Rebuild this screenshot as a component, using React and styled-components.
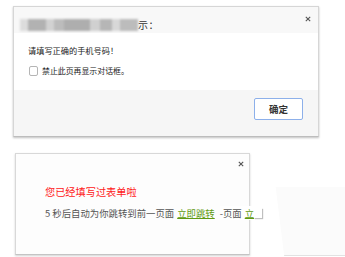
import React from 'react';
import styled, { createGlobalStyle } from 'styled-components';

const GlobalStyle = createGlobalStyle`
  html, body {
    margin: 0;
    padding: 0;
    background: #ffffff;
  }
  body {
    font-family: 'Noto Sans CJK SC', 'Noto Sans', sans-serif;
    color: #333;
  }
`;

const Page = styled.div`
  width: 345px;
  height: 257px;
  overflow: hidden;
  position: relative;
  padding: 6px 0 0 13px;
  box-sizing: border-box;
  display: flex;
  flex-direction: column;
  gap: 16px;
`;

const Dialog = styled.div`
  position: relative;
  width: 306px;
  height: 131px;
  box-sizing: border-box;
  border: 1px solid #d6d6d6;
  border-bottom-color: #bdbdbd;
  box-shadow: 0 1px 2px rgba(0, 0, 0, 0.25);
  display: flex;
  flex-direction: column;
  background: #fff;
`;

const TitleBar = styled.div`
  height: 26px;
  background: #f8f8f8;
  display: flex;
  align-items: flex-end;
  padding-left: 6px;
  box-sizing: border-box;
  padding-bottom: 1px;
`;

// the blurred-out part of the title
const Blur = styled.div`
  display: flex;
  height: 12px;
  width: 118px;
  filter: blur(1px);
  margin-bottom: 1px;
`;

const Piece = styled.div`
  width: ${(p) => p.$w}px;
  background: ${(p) => p.$c};
`;

const TitleText = styled.span`
  font-size: 10px;
  line-height: 14px;
  color: #333;
  letter-spacing: 0.5px;
`;

const Close = styled.button`
  position: absolute;
  top: ${(p) => p.$top}px;
  right: ${(p) => p.$right}px;
  border: 0;
  padding: 0;
  background: transparent;
  display: flex;
  color: #666;
`;

const Body = styled.div`
  height: 57px;
  padding: 11px 0 0 14px;
  box-sizing: border-box;
  display: flex;
  flex-direction: column;
  gap: 9px;
`;

const Message = styled.div`
  font-size: 8.2px;
  line-height: 12px;
  color: #222;
`;

const CheckRow = styled.label`
  display: flex;
  align-items: center;
  gap: 4px;
  padding-left: 1px;
`;

const Box = styled.span`
  width: 9px;
  height: 10px;
  border: 1px solid #b5b5b5;
  border-radius: 2px;
  background: #fff;
  box-sizing: border-box;
`;

const Label = styled.span`
  font-size: 7.9px;
  line-height: 12px;
  color: #222;
`;

const Footer = styled.div`
  flex: 1;
  background: #f6f6f6;
  display: flex;
  justify-content: flex-end;
  align-items: flex-start;
  padding: 8px 15px 0 0;
`;

const Button = styled.button`
  width: 49px;
  height: 22px;
  box-sizing: border-box;
  border: 1px solid #8db0ea;
  border-radius: 2px;
  background: #fff;
  font-family: 'Noto Sans CJK SC', sans-serif;
  font-size: 9.5px;
  font-weight: bold;
  color: #333;
  padding: 0;
`;

const Notice = styled.div`
  position: relative;
  width: 235px;
  height: 102px;
  margin-left: 2px;
  box-sizing: border-box;
  border: 1px solid #d8d8d8;
  border-bottom-color: #c4c4c4;
  box-shadow: 0 1px 2px rgba(0, 0, 0, 0.18);
  background: #fdfdfd;
  padding: 31px 0 0 29px;
  display: flex;
  flex-direction: column;
  gap: 7px;
`;

const Warn = styled.div`
  font-size: 10.2px;
  line-height: 14px;
  color: #ff2020;
`;

const Line = styled.div`
  font-size: 9.4px;
  line-height: 14px;
  color: #555;
  white-space: nowrap;
  display: flex;
  align-items: center;
`;

const Jump = styled.a`
  color: #5f9a12;
  text-decoration: underline;
  margin: ${(p) => (p.$last ? '0 0 0 3px' : '0 5px 0 3px')};
`;

const Tail = styled.span`
  position: relative;
  z-index: 2;
  display: flex;
  align-items: center;
  background: #fff;
`;

const Nub = styled.span`
  width: 8px;
  height: 10px;
  background: #fff;
  box-shadow: 1px 1px 1px rgba(0, 0, 0, 0.25);
`;

// faint leftover patch to the right of the second box
const Smear = styled.div`
  position: absolute;
  left: 250px;
  top: 187px;
  width: 95px;
  height: 68px;
  background: #fbfbfb;
  border-bottom: 1px solid #e2e2e2;
  clip-path: polygon(0 0, 100% 0, 100% 100%, 36% 100%, 27% 0);
`;

const X = () => (
  <svg width="6" height="6" viewBox="0 0 6 6">
    <path d="M0.8 0.8 L5.2 5.2 M5.2 0.8 L0.8 5.2" stroke="#555" strokeWidth="1.1" />
  </svg>
);

const blurPieces = [
  [8, '#dcdcdc'], [18, '#b2b2b2'], [8, '#d2d2d2'], [10, '#bcbcbc'], [26, '#aeaeae'],
  [10, '#d0d0d0'], [12, '#b6b6b6'], [8, '#d8d8d8'], [18, '#bcbcbc'],
];

export default function App() {
  return (
    <>
      <GlobalStyle />
      <Page>
        <Dialog>
          <TitleBar>
            <Blur>
              {blurPieces.map(([w, c], i) => (
                <Piece key={i} $w={w} $c={c} />
              ))}
            </Blur>
            <TitleText>示：</TitleText>
          </TitleBar>
          <Close $top={9} $right={7}>
            <X />
          </Close>
          <Body>
            <Message>请填写正确的手机号码！</Message>
            <CheckRow>
              <Box />
              <Label>禁止此页再显示对话框。</Label>
            </CheckRow>
          </Body>
          <Footer>
            <Button>确定</Button>
          </Footer>
        </Dialog>
        <Notice>
          <Close $top={7} $right={5}>
            <X />
          </Close>
          <Warn>您已经填写过表单啦</Warn>
          <Line>
            5 秒后自动为你跳转到前一页面
            <Jump>立即跳转</Jump>
            <Tail>
              -页面 <Jump $last>立</Jump>
              <Nub />
            </Tail>
          </Line>
        </Notice>
        <Smear />
      </Page>
    </>
  );
}
